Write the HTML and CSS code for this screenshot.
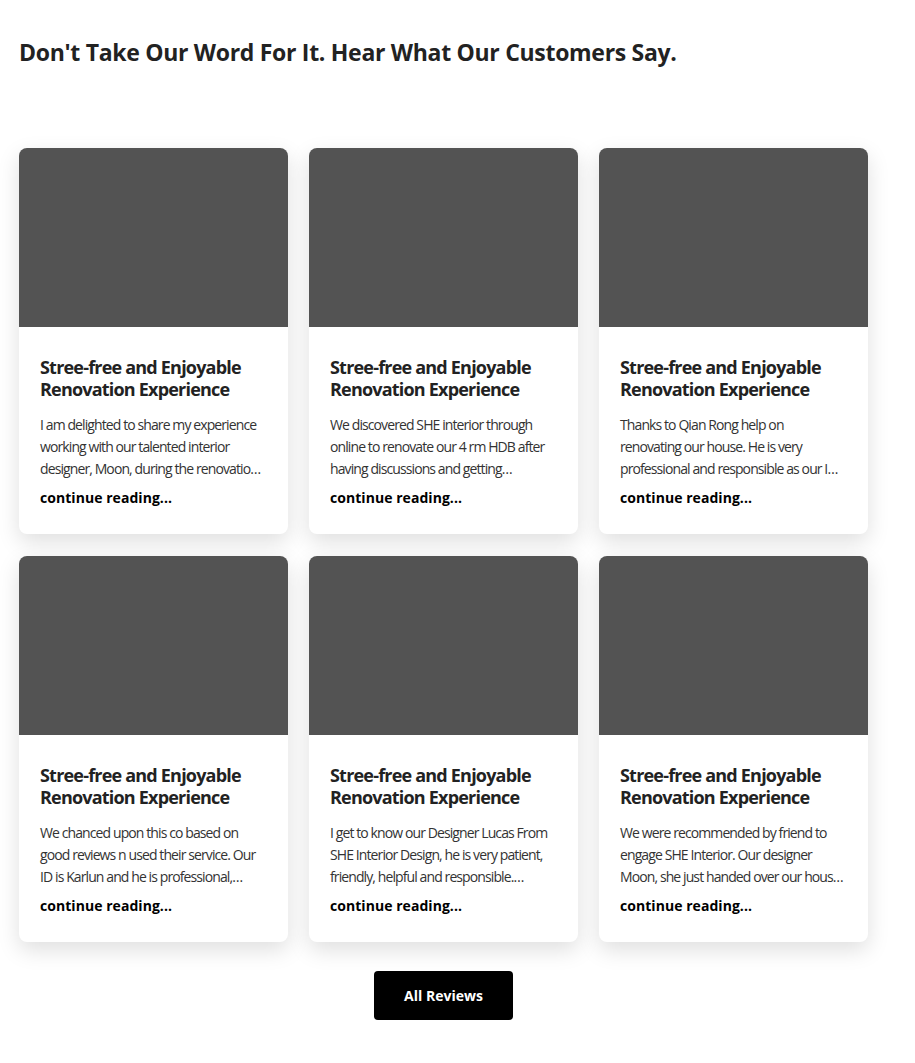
FILE: index.html
```html
<!DOCTYPE html>
<html lang="en">
<head>
<meta charset="utf-8">
<title>Reviews</title>
<link rel="stylesheet" href="styles.css">
</head>
<body>
<section class="reviews">
  <h2 class="reviews-title">Don't Take Our Word For It. Hear What Our Customers Say.</h2>
  <div class="grid">
    <article class="card">
      <div class="card-img"></div>
      <div class="card-body">
        <h3 class="card-title">Stree-free and Enjoyable Renovation Experience</h3>
        <p class="card-text">I am delighted to share my experience working with our talented interior designer, Moon, during the renovatio…</p>
        <a class="card-link" href="#">continue reading...</a>
      </div>
    </article>
    <article class="card">
      <div class="card-img"></div>
      <div class="card-body">
        <h3 class="card-title">Stree-free and Enjoyable Renovation Experience</h3>
        <p class="card-text">We discovered SHE interior through online to renovate our 4 rm HDB after having discussions and getting…</p>
        <a class="card-link" href="#">continue reading...</a>
      </div>
    </article>
    <article class="card">
      <div class="card-img"></div>
      <div class="card-body">
        <h3 class="card-title">Stree-free and Enjoyable Renovation Experience</h3>
        <p class="card-text">Thanks to Qian Rong help on renovating our house. He is very professional and responsible as our I…</p>
        <a class="card-link" href="#">continue reading...</a>
      </div>
    </article>
    <article class="card">
      <div class="card-img"></div>
      <div class="card-body">
        <h3 class="card-title">Stree-free and Enjoyable Renovation Experience</h3>
        <p class="card-text">We chanced upon this co based on good reviews n used their service. Our ID is Karlun and he is professional,…</p>
        <a class="card-link" href="#">continue reading...</a>
      </div>
    </article>
    <article class="card">
      <div class="card-img"></div>
      <div class="card-body">
        <h3 class="card-title">Stree-free and Enjoyable Renovation Experience</h3>
        <p class="card-text">I get to know our Designer Lucas From SHE Interior Design, he is very patient, friendly, helpful and responsible.…</p>
        <a class="card-link" href="#">continue reading...</a>
      </div>
    </article>
    <article class="card">
      <div class="card-img"></div>
      <div class="card-body">
        <h3 class="card-title">Stree-free and Enjoyable Renovation Experience</h3>
        <p class="card-text">We were recommended by friend to engage SHE Interior. Our designer Moon, she just handed over our hous…</p>
        <a class="card-link" href="#">continue reading...</a>
      </div>
    </article>
  </div>
  <div class="actions">
    <a class="btn" href="#">All Reviews</a>
  </div>
</section>
</body>
</html>
```

FILE: styles.css
```css
* { box-sizing: border-box; }
html, body { margin: 0; padding: 0; background: #fff; }
body { font-family: "Open Sans", "Liberation Sans", sans-serif; color: #222; }

.reviews { padding: 36px 47px 42px 19px; }

.reviews-title {
  margin: 0;
  font-size: 23px;
  line-height: 32px;
  font-weight: 700;
  letter-spacing: -0.3px;
  color: #222;
}

.grid {
  margin-top: 80px;
  display: grid;
  grid-template-columns: repeat(3, 269px);
  column-gap: 21px;
  row-gap: 22px;
}

.card {
  background: #fff;
  border-radius: 8px;
  overflow: hidden;
  box-shadow: 0 8px 22px rgba(0, 0, 0, 0.13);
}

.card-img { height: 179px; background: #535353; }

.card-body { padding: 29px 21px 25px; display: flex; flex-direction: column; }

.card-title {
  margin: 0;
  font-size: 18px;
  line-height: 22px;
  font-weight: 700;
  letter-spacing: -0.8px;
  color: #222;
}

.card-text {
  margin: 14px 0 0;
  font-size: 14px;
  line-height: 22px;
  letter-spacing: -0.9px;
  color: #333;
}

.card-link {
  margin-top: 7px;
  font-size: 14px;
  line-height: 22px;
  font-weight: 700;
  letter-spacing: 0.05px;
  color: #000;
  text-decoration: none;
}

.actions { display: flex; justify-content: center; margin-top: 29px; }

.btn {
  width: 139px;
  height: 49px;
  display: flex;
  align-items: center;
  justify-content: center;
  background: #000;
  color: #fff;
  border-radius: 4px;
  font-size: 14px;
  font-weight: 700;
  text-decoration: none;
}
```
